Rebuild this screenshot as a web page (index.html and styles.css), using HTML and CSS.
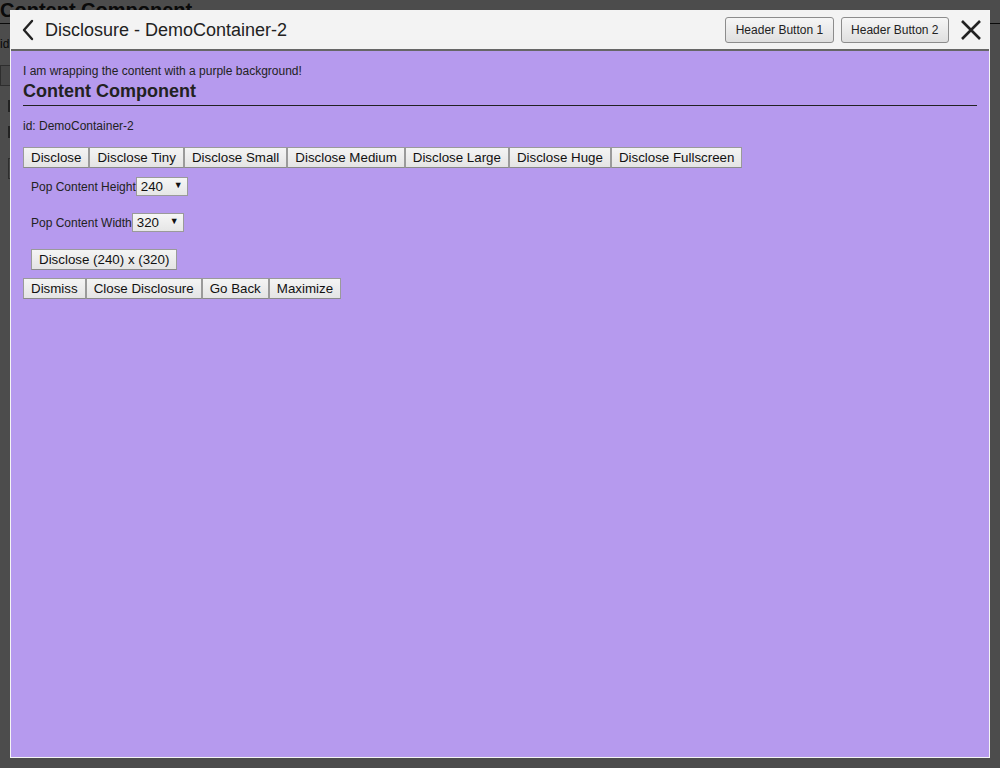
FILE: index.html
```html
<!DOCTYPE html>
<html>
<head>
<meta charset="utf-8">
<link rel="stylesheet" href="styles.css">
</head>
<body>
<div class="page">
  <h2 class="page-title">Content Component</h2>
  <div class="page-id">id:</div>
  <div class="page-btn"></div>
  <div class="page-mark"></div>
  <div class="page-mark"></div>
  <div class="page-btn page-btn-2"></div>
</div>
<div class="overlay"></div>
<div class="modal">
  <div class="header">
    <svg class="back" width="14" height="22" viewBox="0 0 14 22"><path d="M11 2 L3 11 L11 20" fill="none" stroke="#222" stroke-width="2.4" stroke-linecap="round" stroke-linejoin="round"/></svg>
    <div class="title">Disclosure - DemoContainer-2</div>
    <div class="header-actions">
      <button class="hbtn">Header Button 1</button>
      <button class="hbtn">Header Button 2</button>
      <svg class="close" width="22" height="22" viewBox="0 0 22 22"><path d="M2 2 L20 20 M20 2 L2 20" fill="none" stroke="#222" stroke-width="2.6"/></svg>
    </div>
  </div>
  <div class="content">
    <div class="note">I am wrapping the content with a purple background!</div>
    <h2 class="heading">Content Component</h2>
    <div class="id">id: DemoContainer-2</div>
    <div class="btn-row"><button class="btn">Disclose</button><button class="btn">Disclose Tiny</button><button class="btn">Disclose Small</button><button class="btn">Disclose Medium</button><button class="btn">Disclose Large</button><button class="btn">Disclose Huge</button><button class="btn">Disclose Fullscreen</button></div>
    <div class="field field-first"><label class="lbl">Pop Content Height</label><span class="sel sel-h"><select><option>240</option></select></span></div>
    <div class="field"><label class="lbl">Pop Content Width</label><span class="sel sel-w"><select><option>320</option></select></span></div>
    <div class="field field-btn"><button class="btn">Disclose (240) x (320)</button></div>
    <div class="btn-row btn-row-last"><button class="btn">Dismiss</button><button class="btn">Close Disclosure</button><button class="btn">Go Back</button><button class="btn">Maximize</button></div>
  </div>
</div>
</body>
</html>
```
FILE: styles.css
```css
* { box-sizing: border-box; }
html, body { margin: 0; padding: 0; }
body {
  width: 1000px;
  height: 768px;
  overflow: hidden;
  position: relative;
  background: #fff;
  font-family: "Liberation Sans", Arial, sans-serif;
  color: #222;
}
.page { padding: 0; }
.page-title {
  margin: -2px 0 0 0;
  font-size: 20px;
  font-weight: bold;
  line-height: 24px;
  padding-bottom: 1px;
  border-bottom: 1px solid #222;
}
.page-id { font-size: 12px; margin-top: 13px; }
.page-btn {
  margin-top: 14px;
  width: 60px;
  height: 21px;
  border: 1px solid #999;
  background: #eee;
}
.page-mark { margin: 14px 0 0 8px; width: 6px; height: 12px; border-left: 2px solid #777; }
.page-btn-2 { margin: 20px 0 0 8px; }
.overlay {
  position: absolute;
  inset: 0;
  background: rgba(0, 0, 0, 0.7);
}
.modal {
  position: absolute;
  left: 10px;
  top: 10px;
  width: 980px;
  height: 748px;
  background: #b69aee;
  border: 1px solid #f4f4f4;
  border-top: 0;
  display: flex;
  flex-direction: column;
}
.header {
  height: 41px;
  background: #f3f3f3;
  border-bottom: 2px solid #666;
  display: flex;
  align-items: center;
  padding: 0 7px 0 10px;
}
.back { display: block; margin-right: 10px; margin-top: 1px; }
.title {
  font-size: 18px;
  color: #222;
  flex: 1;
  margin-top: 1px;
}
.header-actions { display: flex; align-items: center; gap: 7px; }
.hbtn {
  font-family: "Liberation Sans", Arial, sans-serif;
  font-size: 12px;
  color: #222;
  height: 26px;
  padding: 0 9.5px;
  border: 1px solid #8c8c8c;
  border-radius: 3px;
  background: linear-gradient(#f6f6f6, #dfdfdf);
}
.close { display: block; margin-left: 4px; }
.content {
  flex: 1;
  padding: 13px 12px 0 12px;
}
.note {
  font-size: 12px;
  line-height: 14px;
  color: #222;
}
.heading {
  margin: 2px 0 0 0;
  font-size: 18px;
  font-weight: bold;
  line-height: 22px;
  padding-bottom: 3px;
  border-bottom: 1px solid #222;
  color: #222;
}
.id {
  font-size: 12px;
  line-height: 14px;
  margin-top: 13px;
}
.btn-row { display: flex; margin-top: 14px; }
.btn {
  font-family: "Liberation Sans", Arial, sans-serif;
  font-size: 13.33px;
  color: #111;
  height: 21px;
  padding: 0 7px;
  border: 1px solid #9a9a9a;
  border-bottom-color: #8a8a8a;
  border-radius: 0;
  background: linear-gradient(#f4f4f4, #e4e4e4);
  margin: 0;
  white-space: nowrap;
}
.field {
  margin: 17px 0 0 8px;
  display: flex;
  align-items: center;
  height: 19px;
}
.field-first { margin-top: 9px; }
.field-btn { height: 21px; margin-top: 17px; }
.btn-row-last { margin-top: 8px; }
.lbl {
  font-size: 12px;
  color: #222;
}
.sel { position: relative; display: inline-block; }
.sel select {
  appearance: none;
  -webkit-appearance: none;
  font-family: "Liberation Sans", Arial, sans-serif;
  font-size: 13.33px;
  color: #111;
  width: 52px;
  height: 19px;
  padding: 0 0 0 4px;
  border: 1px solid #9a9a9a;
  border-radius: 0;
  background: linear-gradient(#f6f6f6, #e6e6e6);
  display: block;
}
.sel::after {
  content: "\25BC";
  position: absolute;
  right: 5px;
  top: 3px;
  font-size: 9px;
  color: #111;
  pointer-events: none;
}
```
